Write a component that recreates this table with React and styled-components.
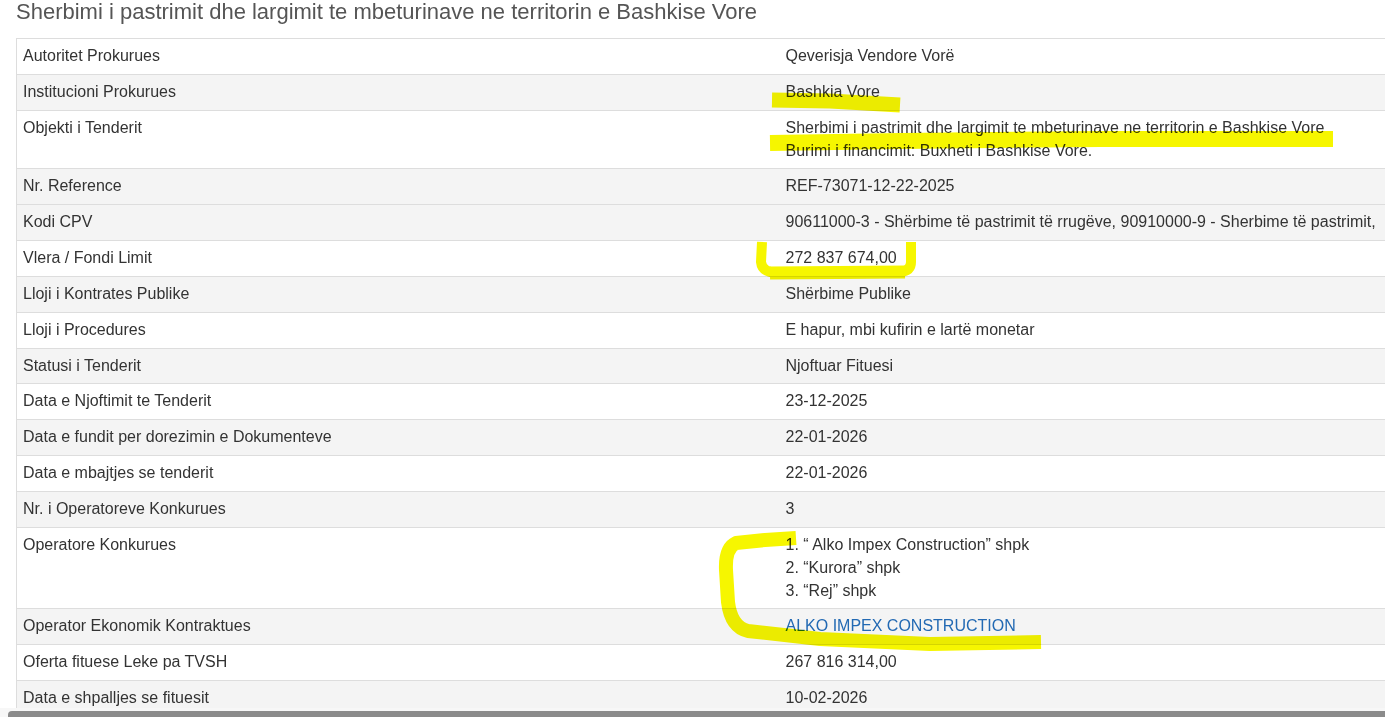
import styled, { createGlobalStyle } from "styled-components";

const GlobalStyle = createGlobalStyle`
  html, body {
    margin: 0;
    padding: 0;
    background: #fff;
    overflow: hidden;
  }
  body {
    font-family: "Liberation Sans", Arial, sans-serif;
    color: #333;
  }
`;

const rows = [
  { label: "Autoritet Prokurues", value: ["Qeverisja Vendore Vorë"] },
  { label: "Institucioni Prokurues", value: ["Bashkia Vore"], shaded: true },
  {
    label: "Objekti i Tenderit",
    value: [
      "Sherbimi i pastrimit dhe largimit te mbeturinave ne territorin e Bashkise Vore",
      "Burimi i financimit: Buxheti i Bashkise Vore.",
    ],
  },
  { label: "Nr. Reference", value: ["REF-73071-12-22-2025"], shaded: true },
  {
    label: "Kodi CPV",
    value: [
      "90611000-3 - Shërbime të pastrimit të rrugëve, 90910000-9 - Sherbime të pastrimit,",
    ],
    shaded: true,
  },
  { label: "Vlera / Fondi Limit", value: ["272 837 674,00"] },
  { label: "Lloji i Kontrates Publike", value: ["Shërbime Publike"], shaded: true },
  { label: "Lloji i Procedures", value: ["E hapur, mbi kufirin e lartë monetar"] },
  { label: "Statusi i Tenderit", value: ["Njoftuar Fituesi"], shaded: true },
  { label: "Data e Njoftimit te Tenderit", value: ["23-12-2025"] },
  {
    label: "Data e fundit per dorezimin e Dokumenteve",
    value: ["22-01-2026"],
    shaded: true,
  },
  { label: "Data e mbajtjes se tenderit", value: ["22-01-2026"] },
  { label: "Nr. i Operatoreve Konkurues", value: ["3"], shaded: true },
  {
    label: "Operatore Konkurues",
    value: [
      "1. “ Alko Impex Construction” shpk",
      "2. “Kurora” shpk",
      "3. “Rej” shpk",
    ],
  },
  {
    label: "Operator Ekonomik Kontraktues",
    value: ["ALKO IMPEX CONSTRUCTION"],
    link: true,
    shaded: true,
  },
  { label: "Oferta fituese Leke pa TVSH", value: ["267 816 314,00"] },
  { label: "Data e shpalljes se fituesit", value: ["10-02-2026"], shaded: true },
];

// highlighter strokes drawn over the page
const marks = [
  { d: "M772,100 L830,101 L900,105", w: 15 },
  { d: "M770,143 L900,141 L1100,139 L1333,139", w: 16 },
  {
    d: "M762,242 L761,262 Q762,272 776,273 L900,272 Q911,271 911,262 L911,242",
    w: 10,
  },
  { d: "M770,273 L905,272", w: 13 },
  {
    d: "M796,538 L765,540 L736,543 Q725,548 726,570 L728,602 Q731,627 748,631 L820,639 L930,644 L1041,642",
    w: 14,
  },
];

const App = () => {
  return (
    <Page>
      <GlobalStyle />
      <Title>
        Sherbimi i pastrimit dhe largimit te mbeturinave ne territorin e Bashkise
        Vore
      </Title>
      <Table>
        <colgroup>
          <LabelCol />
          <col />
        </colgroup>
        <tbody>
          {rows.map((row) => (
            <Row key={row.label} shaded={row.shaded}>
              <Cell>{row.label}</Cell>
              <Cell>
                {row.value.map((line) =>
                  row.link ? (
                    <Link key={line} href="#">
                      {line}
                    </Link>
                  ) : (
                    <Line key={line}>{line}</Line>
                  )
                )}
              </Cell>
            </Row>
          ))}
        </tbody>
      </Table>
      <Marks width="1385" height="717" viewBox="0 0 1385 717">
        {marks.map((m) => (
          <path
            key={m.d}
            d={m.d}
            fill="none"
            stroke="#f6f600"
            strokeWidth={m.w}
            strokeLinecap="butt"
            strokeLinejoin="round"
          />
        ))}
      </Marks>
      <ScrollTrack>
        <ScrollThumb />
      </ScrollTrack>
    </Page>
  );
};

export default App;

const Page = styled.div`
  position: relative;
  height: 717px;
  padding: 0 0 0 16px;
  overflow: hidden;
`;

const Title = styled.h1`
  margin: 0 0 14px 0;
  font-size: 22px;
  line-height: 24px;
  font-weight: normal;
  color: #555;
  white-space: nowrap;
`;

const Table = styled.table`
  width: 1420px;
  table-layout: fixed;
  border-collapse: collapse;
  border: 1px solid #ddd;
  font-size: 16px;
  line-height: 1.42857;
`;

const LabelCol = styled.col`
  width: 763px;
`;

const Row = styled.tr`
  background: ${(p) => (p.shaded ? "#f4f4f4" : "#fff")};
`;

const Cell = styled.td`
  padding: 6px 6px;
  border-top: 1px solid #ddd;
  vertical-align: top;
  white-space: nowrap;
  color: #333;
`;

const Line = styled.div``;

const Link = styled.a`
  display: block;
  color: #2269b3;
  text-decoration: none;
`;

const Marks = styled.svg`
  position: absolute;
  top: 0;
  left: 0;
  pointer-events: none;
  mix-blend-mode: multiply;
`;

const ScrollTrack = styled.div`
  position: absolute;
  left: 0;
  right: 0;
  bottom: 0;
  height: 9px;
  background: #f7f7f7;
  display: flex;
  align-items: flex-end;
  padding-left: 8px;
`;

const ScrollThumb = styled.div`
  flex: 1;
  height: 6px;
  background: #8b8b8b;
  border-radius: 4px 0 0 0;
`;
